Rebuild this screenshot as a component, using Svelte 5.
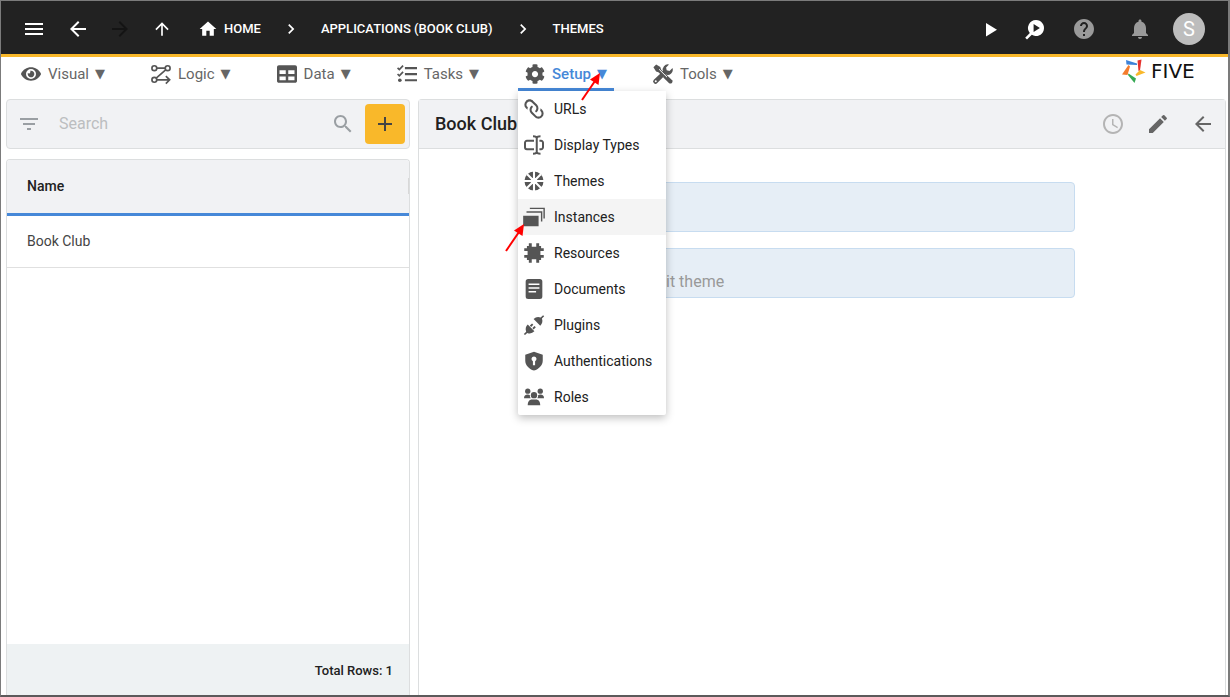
<script>
  const icons = {
    menu: '<path d="M3 18h18v-2H3zm0-5h18v-2H3zm0-7v2h18V6z"/>',
    back: '<path d="M20 11H7.83l5.59-5.59L12 4l-8 8 8 8 1.41-1.41L7.83 13H20z"/>',
    forward: '<path d="M4 11h12.17l-5.59-5.59L12 4l8 8-8 8-1.41-1.41L16.17 13H4z"/>',
    up: '<path d="M4 12l1.41 1.41L11 7.83V20h2V7.83l5.58 5.59L20 12l-8-8z"/>',
    home: '<path d="M10 20v-6h4v6h5v-8h3L12 3 2 12h3v8z"/>',
    chevron: '<path d="M10 6 8.59 7.41 13.17 12l-4.58 4.59L10 18l6-6z"/>',
    play: '<path d="M8 6v13.5l11-6.7z"/>',
    inspect: '<path fill-rule="evenodd" d="M14 3a8 8 0 1 1-4.2 14.8L5 22.4 3.2 20.8 7.8 16A8 8 0 0 1 14 3zM11.6 7v8l6.3-4z"/>',
    help: '<path d="M12 2C6.48 2 2 6.48 2 12s4.48 10 10 10 10-4.48 10-10S17.52 2 12 2zm1 17h-2v-2h2zm2.07-7.75-.9.92C13.45 12.9 13 13.5 13 15h-2v-.5c0-1.1.45-2.1 1.17-2.83l1.24-1.26c.37-.36.59-.86.59-1.41 0-1.1-.9-2-2-2s-2 .9-2 2H8c0-2.21 1.79-4 4-4s4 1.79 4 4c0 .88-.36 1.68-.93 2.25z"/>',
    bell: '<path d="M12 22c1.1 0 2-.9 2-2h-4c0 1.1.9 2 2 2zm6-6v-5c0-3.07-1.63-5.64-4.5-6.32V4c0-.83-.67-1.5-1.5-1.5s-1.5.67-1.5 1.5v.68C7.64 5.36 6 7.92 6 11v5l-2 2v1h16v-1z"/>',
    filter: '<path d="M10 18h4v-2h-4zM3 6v2h18V6zm3 7h12v-2H6z"/>',
    search: '<path d="M15.5 14h-.79l-.28-.27C15.41 12.59 16 11.11 16 9.5 16 5.91 13.09 3 9.5 3S3 5.91 3 9.5 5.91 16 9.5 16c1.61 0 3.09-.59 4.23-1.57l.27.28v.79l5 4.99L20.49 19zm-6 0C7.01 14 5 11.99 5 9.5S7.01 5 9.5 5 14 7.01 14 9.5 11.99 14 9.5 14z"/>',
    plus: '<path d="M19 13h-6v6h-2v-6H5v-2h6V5h2v6h6z"/>',
    clock: '<path d="M11.99 2C6.47 2 2 6.48 2 12s4.47 10 9.99 10C17.52 22 22 17.52 22 12S17.52 2 11.99 2zM12 20c-4.42 0-8-3.58-8-8s3.58-8 8-8 8 3.58 8 8-3.58 8-8 8zm.5-13H11v6l5.25 3.15.75-1.23-4.5-2.67z"/>',
    pencil: '<path d="M3 17.25V21h3.75L17.81 9.94l-3.75-3.75zM20.71 7.04c.39-.39.39-1.02 0-1.41l-2.34-2.34a.9959.9959 0 0 0-1.41 0l-1.83 1.83 3.75 3.75z"/>',
    visual: '<g transform="scale(.04167) translate(0 32)"><path d="M572.52 241.4C518.29 135.59 410.93 64 288 64S57.68 135.64 3.48 241.41a32.35 32.35 0 0 0 0 29.19C57.71 376.41 165.07 448 288 448s230.32-71.64 284.52-177.41a32.35 32.35 0 0 0 0-29.19zM288 400a144 144 0 1 1 144-144 143.93 143.93 0 0 1-144 144zm0-240a95.31 95.31 0 0 0-25.31 3.79 47.85 47.85 0 0 1-66.9 66.9A95.78 95.78 0 1 0 288 160z"/></g>',
    logic: '<g fill="none" stroke="currentColor" stroke-width="2"><circle cx="4" cy="5" r="2.9"/><circle cx="20" cy="5" r="2.9"/><circle cx="4" cy="19" r="2.9"/><path d="M7 5h10M17.6 7 6.2 17M7 19h15M17.8 14.5l4.6 4.5-4.6 4.5"/></g>',
    data: '<g transform="scale(.046875)"><path d="M464 32H48C21.49 32 0 53.49 0 80v352c0 26.51 21.49 48 48 48h416c26.51 0 48-21.49 48-48V80c0-26.51-21.49-48-48-48zM224 416H64v-96h160v96zm0-160H64v-96h160v96zm224 160H288v-96h160v96zm0-160H288v-96h160v96z"/></g>',
    tasks: '<path d="M9.5 3.6H24v2.6H9.5zM9.5 10.9H24v2.6H9.5zM9.5 18.2H24v2.6H9.5z"/><circle cx="3.4" cy="19.5" r="2.2"/><path fill="none" stroke="currentColor" stroke-width="2" d="m.7 4.6 2.1 2.1L7.3 2M.7 12l2.1 2.1 4.5-4.7"/>',
    setup: '<g transform="scale(.046875)"><path d="M487.4 315.7l-42.6-24.6c4.3-23.2 4.3-47 0-70.2l42.6-24.6c4.9-2.8 7.1-8.6 5.5-14-11.1-35.6-30-67.8-54.7-94.6-3.8-4.1-10-5.1-14.8-2.3L380.8 110c-17.9-15.4-38.5-27.3-60.8-35.1V25.8c0-5.6-3.9-10.5-9.4-11.7-36.7-8.2-74.3-7.8-109.2 0-5.5 1.2-9.4 6.1-9.4 11.7V75c-22.2 7.9-42.8 19.8-60.8 35.1L88.7 85.5c-4.9-2.8-11-1.9-14.8 2.3-24.7 26.7-43.6 58.9-54.7 94.6-1.7 5.4.6 11.2 5.5 14L67.3 221c-4.3 23.2-4.3 47 0 70.2l-42.6 24.6c-4.9 2.8-7.1 8.6-5.5 14 11.1 35.6 30 67.8 54.7 94.6 3.8 4.1 10 5.1 14.8 2.3l42.6-24.6c17.9 15.4 38.5 27.3 60.8 35.1v49.2c0 5.6 3.9 10.5 9.4 11.7 36.7 8.2 74.3 7.8 109.2 0 5.5-1.2 9.4-6.1 9.4-11.7v-49.2c22.2-7.9 42.8-19.8 60.8-35.1l42.6 24.6c4.9 2.8 11 1.9 14.8-2.3 24.7-26.7 43.6-58.9 54.7-94.6 1.5-5.5-.7-11.3-5.6-14.1zM256 336c-44.1 0-80-35.9-80-80s35.9-80 80-80 80 35.9 80 80-35.9 80-80 80z"/></g>',
    tools: '<path d="M.5 3.8 3.8.5l5 3.2.8 3 4.4 4.4-3.1 3.1-4.4-4.4-2.8-.8z"/><path d="m13.8 12.9 2-.3 7.2 6.8a2.6 2.6 0 0 1-3.6 3.6L12.3 16.2l.3-1.9z"/><path fill-rule="evenodd" d="M23.4 4.8 19.8 8.3l-3.4-.7-.7-3.4L19.2.6a6.3 6.3 0 0 0-7.3 8.2L1 18.8a2.8 2.8 0 0 0 4.1 4.1L15.3 12.7a6.3 6.3 0 0 0 8.1-7.9zM3.3 19.4a1.2 1.2 0 1 1 0 2.4 1.2 1.2 0 0 1 0-2.4z"/><path stroke="#fff" stroke-width="1.2" d="m7.3 6.3 9.5 9.5"/>',
    urls: '<g transform="translate(27 -3) scale(-1.25 1.25)"><path d="M10.59 13.41C11 13.8 11 14.44 10.59 14.83C10.2 15.22 9.56 15.22 9.17 14.83C7.22 12.88 7.22 9.71 9.17 7.76L12.71 4.22C14.66 2.27 17.83 2.27 19.78 4.22C21.73 6.17 21.73 9.34 19.78 11.29L18.29 12.78C18.3 11.96 18.17 11.14 17.89 10.36L18.36 9.88C19.54 8.71 19.54 6.81 18.36 5.64C17.19 4.46 15.29 4.46 14.12 5.64L10.59 9.17C9.41 10.34 9.41 12.24 10.59 13.41M13.41 9.17C13.8 8.78 14.44 8.78 14.83 9.17C16.78 11.12 16.78 14.29 14.83 16.24L11.29 19.78C9.34 21.73 6.17 21.73 4.22 19.78C2.27 17.83 2.27 14.66 4.22 12.71L5.71 11.22C5.7 12.04 5.83 12.86 6.11 13.65L5.64 14.12C4.46 15.29 4.46 17.19 5.64 18.36C6.81 19.54 8.71 19.54 9.88 18.36L13.41 14.83C14.59 13.66 14.59 11.76 13.41 10.59C13 10.2 13 9.56 13.41 9.17Z"/></g>',
    display: '<g fill="none" stroke="currentColor" stroke-width="2.4"><path d="M12 17H3.5A2.3 2.3 0 0 1 1.2 14.7V9.3A2.3 2.3 0 0 1 3.5 7H12M18.5 7h2a2.3 2.3 0 0 1 2.3 2.3v5.4a2.3 2.3 0 0 1-2.3 2.3h-2M15.3 3v18M10.8 1.5c2.5 0 4.5.8 4.5 2.3 0-1.5 2-2.3 4.5-2.3M10.8 22.5c2.5 0 4.5-.8 4.5-2.3 0 1.5 2 2.3 4.5 2.3"/></g>',
    themes: '<circle cx="12" cy="12" r="11.5"/><path fill="none" stroke="#fff" stroke-width="2.5" d="M12 0v24M0 12h24M3.5 3.5l17 17M20.5 3.5l-17 17"/><circle cx="12" cy="12" r="4" fill="#fff"/>',
    instances: '<path d="M-1 10.5h18.5V23H-1zM3 5.2h19v12.3h-1.7V6.9H3zM7 .8h18v13h-1.7V2.5H7z"/>',
    resources: '<path d="M3.5 3.5h2.3V.3h3.5v4.2h5.4V.3h3.5v3.2h2.3v2.7h3.2v3.5h-4v4.6h4v3.5h-3.2v2.7h-2.3v3.2h-3.5v-4.2H9.3v4.2H5.8v-3.2H3.5v-2.7H.3v-3.500h4V9.700h-4V6.200h3.200z"/>',
    documents: '<path fill-rule="evenodd" d="M5 0h14a3 3 0 0 1 3 3v18a3 3 0 0 1-3 3H5a3 3 0 0 1-3-3V3a3 3 0 0 1 3-3zm.5 5.500v1.800h13V5.500zm0 4.500v1.800h13V10zm0 4.500v1.800h9v-1.800z"/>',
    plugins: '<path d="m11.5 4.8 8 8a8 8 0 0 0 2-8.6L24.2 1.5 22.9.2 20 2.9a8 8 0 0 0-8.5 1.9z"/><path d="m4.5 11.5 8 8a8 8 0 0 1-8.6 2L1.2 24-.2 22.7 2.6 20a8 8 0 0 1 1.9-8.5z"/><path fill="none" stroke="currentColor" stroke-width="2.2" d="m7.8 13.500 2.600-2.600M10.800 16.500l2.600-2.600"/>',
    auth: '<path fill-rule="evenodd" d="M12 .8 22.5 4.5v6.8c0 5.5-4 10-10.5 12.2C5.5 21.3 1.5 16.8 1.5 11.3V4.5zM12 6.5a3 3 0 0 0-1.3 5.7V17h2.6v-4.8A3 3 0 0 0 12 6.5z"/>',
    roles: '<circle cx="4.5" cy="5" r="3.2"/><circle cx="19.5" cy="5" r="3.2"/><circle cx="12" cy="9.8" r="3.8"/><path d="M0 13.5c0-3 1.500-4.500 4.500-4.500 1 0 2 .3 2.600.8a5 5 0 0 0 .9 3.700zM24 13.500c0-3-1.500-4.500-4.500-4.500-1 0-2 .3-2.600.8a5 5 0 0 1-.9 3.700zM4.500 22c0-4.500 2.200-7 5-7h5c2.800 0 5 2.500 5 7z"/>'
  };

  const nav = [
    { id: 'visual', label: 'Visual' },
    { id: 'logic', label: 'Logic' },
    { id: 'data', label: 'Data' },
    { id: 'tasks', label: 'Tasks' },
    { id: 'setup', label: 'Setup' },
    { id: 'tools', label: 'Tools' }
  ];
  const setupItems = [
    { id: 'urls', label: 'URLs' },
    { id: 'display', label: 'Display Types' },
    { id: 'themes', label: 'Themes' },
    { id: 'instances', label: 'Instances' },
    { id: 'resources', label: 'Resources' },
    { id: 'documents', label: 'Documents' },
    { id: 'plugins', label: 'Plugins' },
    { id: 'auth', label: 'Authentications' },
    { id: 'roles', label: 'Roles' }
  ];
  const rows = ['Book Club'];
  let open = $state('setup');
  let hovered = $state('instances');
</script>

{#snippet icon(name, size = 24)}
  <svg class="icon" width={size} height={size} viewBox="0 0 24 24" aria-hidden="true">{@html icons[name]}</svg>
{/snippet}

{#snippet pointer(kind)}
  <svg class="pointer {kind}" width="22" height="30" viewBox="0 0 22 30" aria-hidden="true">
    <path d="M2 28 15 9" stroke="#f00" stroke-width="2" />
    <path d="M20 1 18.5 13 10 7.5z" fill="#f00" />
  </svg>
{/snippet}

<div class="frame">
  <header class="topbar">
    <button class="ib first" aria-label="Menu">{@render icon('menu')}</button>
    <button class="ib" aria-label="Back">{@render icon('back')}</button>
    <button class="ib dim" aria-label="Forward" disabled>{@render icon('forward')}</button>
    <button class="ib" aria-label="Up">{@render icon('up', 20)}</button>
    <nav class="crumbs" aria-label="Breadcrumb">
      <a href="#home">{@render icon('home', 20)}HOME</a>
      {@render icon('chevron', 20)}
      <a href="#applications">APPLICATIONS (BOOK CLUB)</a>
      {@render icon('chevron', 20)}
      <a href="#themes">THEMES</a>
    </nav>
    <div class="actions">
      <div class="run">
        <button class="ib" aria-label="Run">{@render icon('play')}</button>
        <button class="ib" aria-label="Inspect">{@render icon('inspect')}</button>
      </div>
      <div class="info">
        <button class="ib" aria-label="Help">{@render icon('help')}</button>
        <button class="ib" aria-label="Notifications">{@render icon('bell')}</button>
      </div>
      <button class="avatar" aria-label="Account">S</button>
    </div>
  </header>

  <div class="menubar">
    <nav class="tabs" aria-label="Main">
      {#each nav as n}
        <div class="tab" class:active={open === n.id}>
          <button class="tab-btn" onclick={() => (open = open === n.id ? '' : n.id)}>
            {@render icon(n.id, 20)}
            <span class="label">{n.label}</span>
            <span class="caret">▼</span>
          </button>
          {#if n.id === 'setup' && open === 'setup'}
            <div class="menu" role="menu">
              {#each setupItems as item}
                <button
                  role="menuitem"
                  class="menu-item"
                  class:hovered={hovered === item.id}
                  onmouseenter={() => (hovered = item.id)}
                >
                  {@render icon(item.id, 20)}{item.label}
                </button>
              {/each}
            </div>
            {@render pointer('at-tab')}
            {@render pointer('at-item')}
          {/if}
        </div>
      {/each}
    </nav>
    <a class="brand" href="#five">
      <svg width="24" height="24" viewBox="0 0 24 24" aria-hidden="true">
        <path fill="#3d82d8" d="M4 1 15 4.5V6L4.5 5.5z" />
        <path fill="#e5322e" d="m15.5 1.5 4-1-1.5 11-1.5.5z" />
        <path fill="#f9b82a" d="m18 11 5.5 2.5-9 3.5-1-1.5z" />
        <path fill="#35a853" d="m6.5 14.5 7.5 5-1.5 4.5L6 16z" />
        <path fill="#f47c2c" d="M6.5 6 8 7.5 5.5 16 0 15.5z" />
      </svg>
      <span>FIVE</span>
    </a>
  </div>

  <main>
    <section class="list">
      <div class="searchbar">
        <button class="ib filter" aria-label="Filter">{@render icon('filter')}</button>
        <input type="search" placeholder="Search" aria-label="Search" />
        <button class="ib filter" aria-label="Search">{@render icon('search')}</button>
        <button class="add" aria-label="Add">{@render icon('plus')}</button>
      </div>
      <div class="grid">
        <table>
          <thead><tr><th scope="col"><div>Name</div></th></tr></thead>
          <tbody>
            {#each rows as r}<tr><td>{r}</td></tr>{/each}
          </tbody>
        </table>
        <footer>Total Rows: 1</footer>
      </div>
    </section>

    <section class="detail">
      <header>
        <h1>Book Club</h1>
        <button class="ib faint" aria-label="History">{@render icon('clock')}</button>
        <button class="ib" aria-label="Edit">{@render icon('pencil')}</button>
        <button class="ib" aria-label="Close">{@render icon('back')}</button>
      </header>
      <form>
        <input aria-label="Name" readonly />
        <input aria-label="Theme" placeholder="it theme" readonly />
      </form>
    </section>
  </main>
</div>

<style>
  :global(body) { margin: 0; }
  .frame, .frame * { box-sizing: border-box; }
  .frame {
    height: 100vh;
    display: flex;
    flex-direction: column;
    border: solid #7b7b7b;
    border-width: 1px 2px 2px 1px;
    border-bottom-color: #5c5a5b;
    background: #fff;
    color: #212121;
    font: 14px/20px Roboto, sans-serif;
  }
  button, input { font: inherit; color: inherit; border: 0; background: none; padding: 0; margin: 0; }
  button { cursor: pointer; }
  a { color: inherit; text-decoration: none; }
  .icon { display: block; flex: none; fill: currentColor; overflow: visible; }
  .ib { display: flex; align-items: center; justify-content: center; width: 24px; height: 24px; flex: none; }

  .topbar {
    display: flex;
    align-items: center;
    gap: 18px;
    height: 56px;
    padding: 2px 23px 0 21px;
    background: #222;
    border-bottom: 3px solid #f9b82a;
    color: #fff;
    flex: none;
  }
  .first { margin-right: 2px; }
  .dim { color: #141414; }
  .crumbs { display: flex; align-items: center; gap: 20px; margin-left: 6px; font-size: 13px; font-weight: 500; white-space: nowrap; }
  .crumbs a { display: flex; align-items: center; gap: 6px; }
  .actions { display: flex; align-items: center; gap: 21px; margin-left: auto; }
  .run, .info { display: flex; }
  .run { gap: 20px; margin-right: 5px; }
  .info { gap: 32px; color: #9a9a9a; }
  .avatar { width: 32px; height: 32px; border-radius: 50%; background: #bdbdbd; color: #fff; font-size: 20px; }

  .menubar { display: flex; justify-content: space-between; height: 42px; padding: 0 19px 0 13px; flex: none; }
  .tabs { display: flex; gap: 32px; }
  .tab { position: relative; height: 34px; }
  .tab-btn { display: flex; align-items: center; height: 34px; padding: 3px 7px 0; gap: 6px; font-size: 15px; color: #666; border-bottom: 3px solid transparent; }
  .tab-btn .icon { color: #555; }
  .label { padding-left: 1px; }
  .caret { font-family: "DejaVu Sans", sans-serif; font-size: 13px; }
  .active .tab-btn { color: #4688d8; border-bottom-color: #4688d8; border-radius: 2px 2px 0 0; font-weight: 500; }
  .menu {
    position: absolute;
    z-index: 2;
    top: 100%;
    left: 0;
    min-width: 148px;
    background: #fff;
    border-radius: 0 0 2px 2px;
    box-shadow: 0 3px 8px rgba(0, 0, 0, .25);
  }
  .menu-item { display: flex; align-items: center; gap: 10px; width: 100%; height: 36px; padding: 0 12px 0 6px; white-space: nowrap; text-align: left; }
  .menu-item .icon { color: #555; }
  .hovered { background: #f4f4f4; }
  .pointer { position: absolute; z-index: 3; fill: none; pointer-events: none; }
  .at-tab { left: 62px; top: 15px; }
  .at-item { left: -14px; top: 166px; }
  .brand { display: grid; grid-template-columns: 24px 58px; gap: 5px; height: 28px; align-items: center; color: #111; font: 20px/24px "DejaVu Sans", sans-serif; }

  main { flex: 1; min-height: 0; display: grid; grid-template-columns: 1fr 2fr; gap: 8px; padding: 0 2px 0 5px; }
  .list { display: flex; flex-direction: column; gap: 10px; min-width: 0; }
  .searchbar { display: flex; align-items: center; height: 50px; padding: 0 4px 0 10px; gap: 10px; border: 1px solid #dcdedf; border-radius: 4px; background: #f1f2f4; flex: none; }
  .searchbar input { flex: 1; min-width: 0; padding-left: 8px; font-size: 16px; outline: 0; }
  .searchbar input::placeholder { color: #bcbec0; opacity: 1; }
  .filter { color: #9a9fa3; }
  .add { display: flex; align-items: center; justify-content: center; width: 40px; height: 40px; border-radius: 4px; background: #f9b82a; color: #444; }
  .grid { flex: 1; display: flex; flex-direction: column; border: 1px solid #dcdedf; border-bottom: 0; border-radius: 4px 4px 0 0; overflow: hidden; }
  table { width: 100%; border-collapse: separate; border-spacing: 0; }
  th, td { text-align: left; padding: 0 0 2px 20px; }
  th { height: 56px; background: #f1f2f4; border-bottom: 3px solid #4688d8; font-weight: 500; }
  th div { height: 16px; line-height: 16px; border-right: 1px solid #d8d8d8; }
  td { height: 52px; border-bottom: 1px solid #e0e0e0; color: #444; }
  footer { display: flex; align-items: center; justify-content: flex-end; height: 51px; margin-top: auto; padding: 2px 16px 0; background: #eef2f3; font-size: 13px; font-weight: 500; }

  .detail { border: 1px solid #dcdedf; border-bottom: 0; border-radius: 4px 4px 0 0; min-width: 0; }
  .detail header { display: flex; align-items: center; gap: 21px; height: 49px; padding: 0 10px 0 16px; background: #f1f2f4; border-bottom: 1px solid #dcdedf; color: #666; }
  h1 { margin: 0 auto 0 0; font-size: 18px; line-height: 24px; font-weight: 500; color: #212121; }
  .faint { color: #b4b4b4; }
  form { display: flex; flex-direction: column; gap: 16px; padding: 33px 150px; }
  form input { height: 50px; padding: 16px 16px 0 96px; border: 1px solid #c7dcf0; border-radius: 4px; background: #e6eef6; font-size: 16px; }
  form input::placeholder { color: #999; opacity: 1; }
</style>
